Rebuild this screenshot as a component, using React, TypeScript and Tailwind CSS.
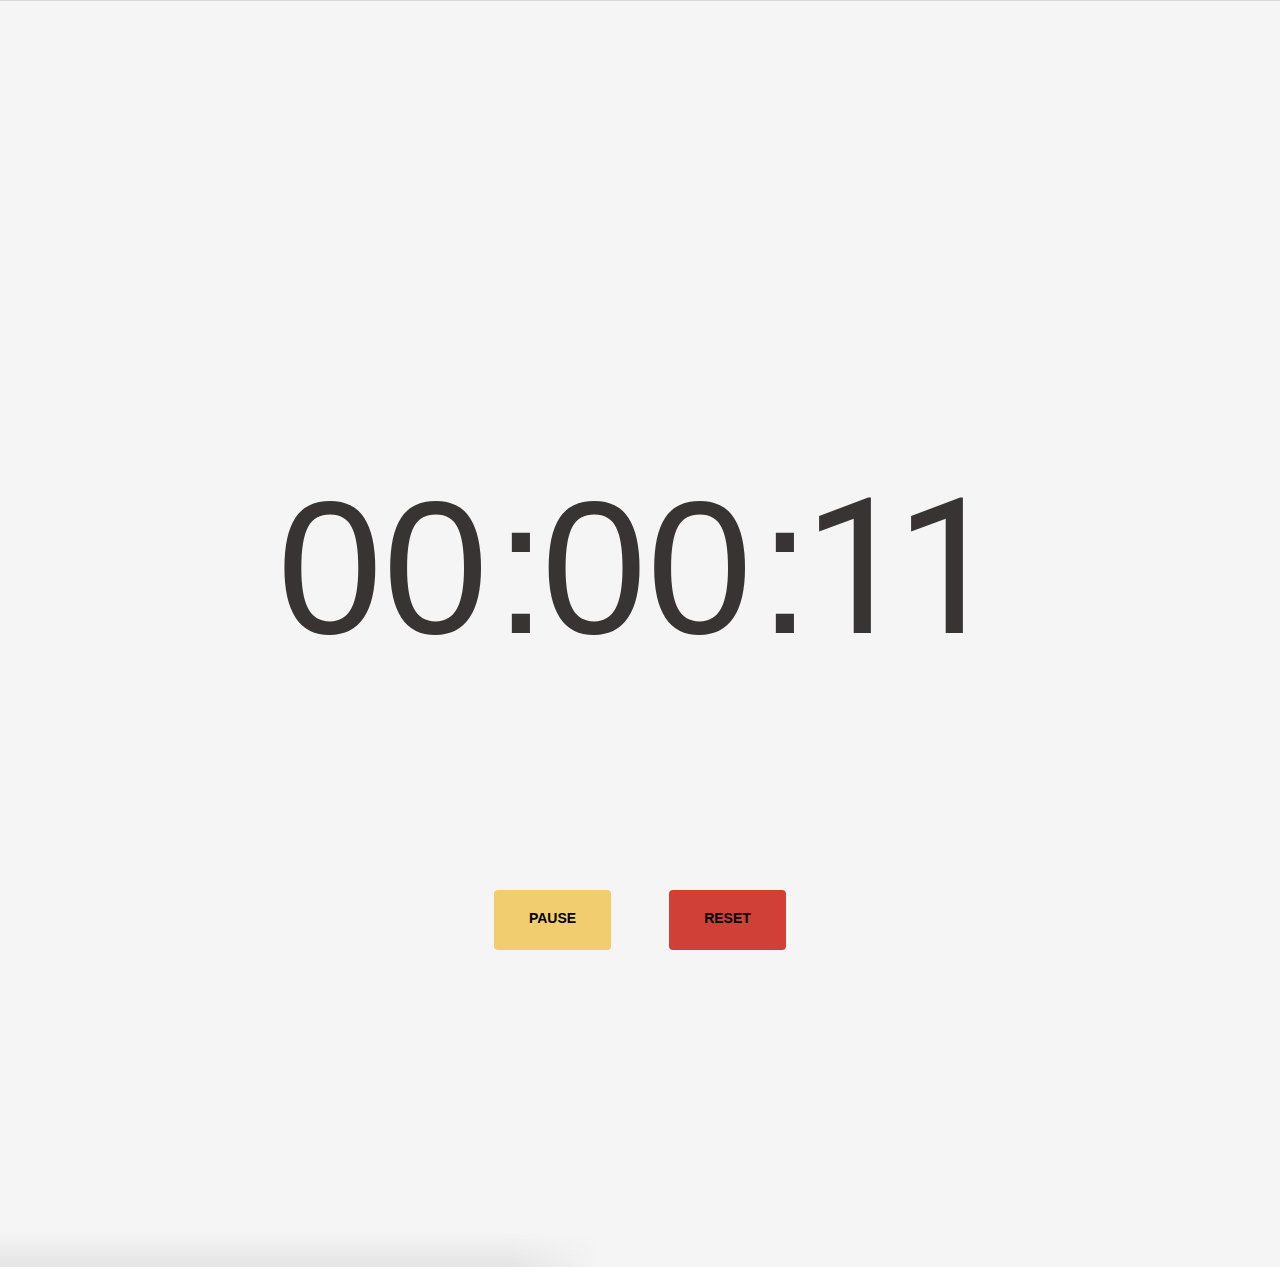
export default function App() {
  return (
    <div className="relative min-h-[1267px] w-full overflow-hidden border-t border-[#d8d8d8] bg-[#f5f5f5] font-['Liberation_Sans',Arial,sans-serif]">
      <div className="flex flex-col items-center pt-[471px]">
        {/* Clock */}
        <div className="whitespace-nowrap pr-[16px] text-[190px] leading-none text-[#383434]">
          <span>00</span>
          <span className="inline-block pl-[6px] tracking-[-6px]">:</span>
          <span>00</span>
          <span className="inline-block pl-[6px] tracking-[-8px]">:</span>
          <span className="inline-block font-['Roboto',sans-serif] tracking-[-15px]">11</span>
        </div>

        {/* Controls */}
        <div className="mt-[227px] flex gap-[58px]">
          <button className="h-[60px] w-[117px] rounded-[4px] bg-[#f2cd6f] pb-[3px] text-[14px] font-bold text-black">
            PAUSE
          </button>
          <button className="h-[60px] w-[117px] rounded-[4px] bg-[#d04037] pb-[3px] text-[14px] font-bold text-black">
            RESET
          </button>
        </div>
      </div>

      {/* faint shadow at the bottom-left edge */}
      <div className="pointer-events-none absolute bottom-0 left-0 h-[34px] w-[600px] bg-gradient-to-b from-transparent to-[#e4e4e4] [mask-image:linear-gradient(to_right,black_85%,transparent)]" />
    </div>
  );
}
